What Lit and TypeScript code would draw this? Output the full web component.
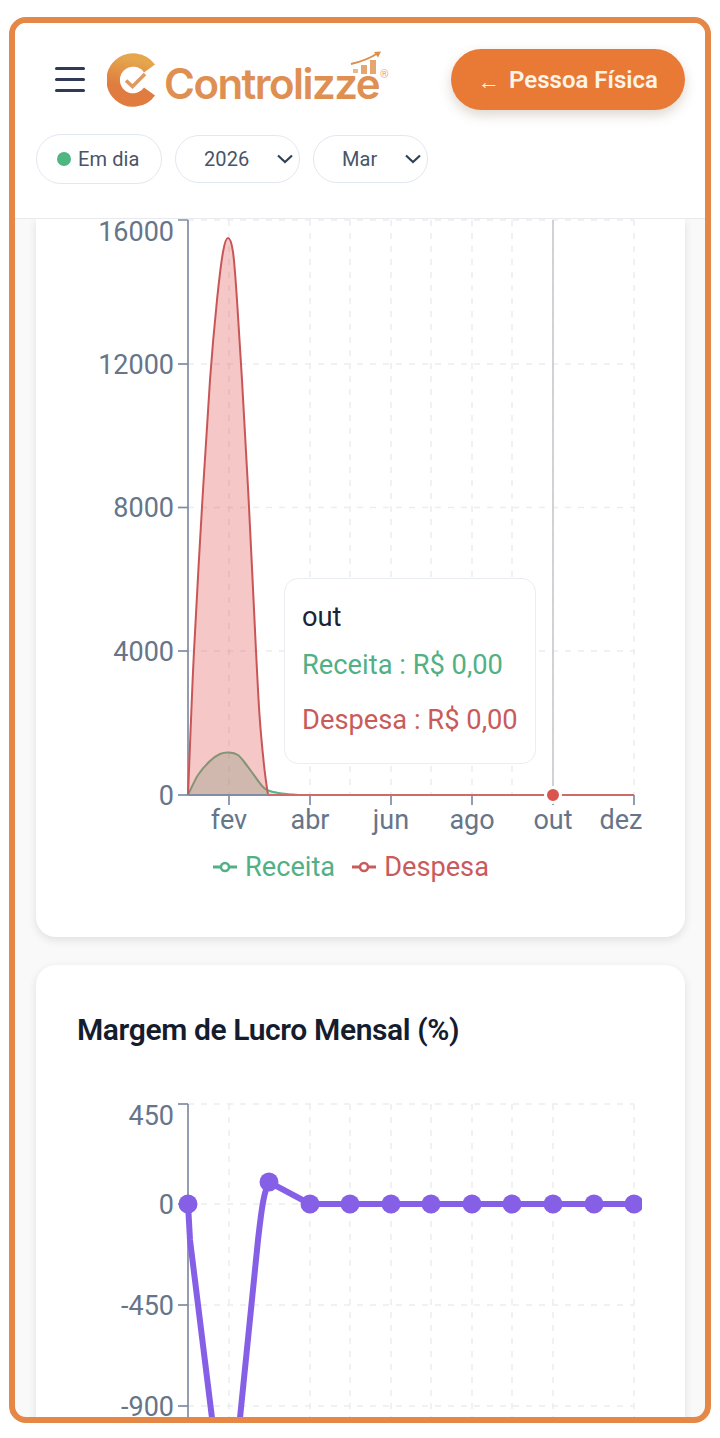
import { LitElement, html, css, svg } from "lit";
import { customElement } from "lit/decorators.js";

type Pt = [number, number];

// catmull-rom through hand traced points, gives the same soft look as the chart curves
function smooth(pts: Pt[]): string {
  let d = `M${pts[0][0]} ${pts[0][1]}`;
  for (let i = 0; i < pts.length - 1; i++) {
    const p0 = pts[Math.max(i - 1, 0)];
    const p1 = pts[i];
    const p2 = pts[i + 1];
    const p3 = pts[Math.min(i + 2, pts.length - 1)];
    const c1x = p1[0] + (p2[0] - p0[0]) / 6;
    const c1y = p1[1] + (p2[1] - p0[1]) / 6;
    const c2x = p2[0] - (p3[0] - p1[0]) / 6;
    const c2y = p2[1] - (p3[1] - p1[1]) / 6;
    d += ` C${c1x.toFixed(1)} ${c1y.toFixed(1)} ${c2x.toFixed(1)} ${c2y.toFixed(1)} ${p2[0]} ${p2[1]}`;
  }
  return d;
}

const RED: Pt[] = [
  [188, 795], [191, 720], [194, 651], [202, 507], [210, 380], [217, 300], [223, 252], [228, 238],
  [233, 252], [237, 300], [242, 380], [249, 507], [256, 651], [259.5, 715], [264, 765], [268, 795],
];
const GREEN: Pt[] = [
  [188, 795], [198, 775], [210, 761], [220, 754], [229, 752.5], [238, 755], [245, 763], [251, 771], [263, 787],
  [270, 791], [282, 793.5], [300, 795],
];

const GRID_X = [229, 310, 350, 391, 431, 472, 512, 553, 634];
const MONTHS: [string, number, number][] = [
  ["fev", 229, 229], ["abr", 310, 310], ["jun", 391, 391], ["ago", 472, 472], ["out", 553, 553], ["dez", 634, 621],
];
const MARGIN_X = [310, 350, 391, 431, 472, 512, 553, 594, 634];

@customElement("app-root")
export class AppRoot extends LitElement {
  static styles = css`
    :host {
      display: block;
      box-sizing: border-box;
      width: 720px;
      height: 1438px;
      padding: 17px 9px 15px;
      background: #fff;
      font-family: Roboto, "Liberation Sans", sans-serif;
    }
    .frame {
      box-sizing: border-box;
      height: 1406px;
      border: 6px solid #e58847;
      border-radius: 17px;
      overflow: hidden;
      display: flex;
      flex-direction: column;
      background: #f9f9f9;
    }
    header {
      box-sizing: border-box;
      flex: none;
      height: 196px;
      padding: 26px 20px 0 21px;
      background: #fff;
      border-bottom: 1px solid #e8eaed;
    }
    .top {
      display: flex;
      align-items: center;
      height: 61px;
    }
    .burger {
      width: 30px;
      height: 25px;
      margin: 0 22px 0 19px;
      flex: none;
      display: flex;
      flex-direction: column;
      justify-content: space-between;
    }
    .burger span {
      height: 3px;
      border-radius: 2px;
      background: #2f3b52;
    }
    .logo {
      position: relative;
      display: flex;
      align-items: center;
      flex: 1;
      height: 61px;
    }
    .logo-mark {
      flex: none;
    }
    .logo-text {
      margin-left: 5px;
      margin-top: 8px;
      font-family: Inter, sans-serif;
      font-size: 42px;
      font-weight: 600;
      letter-spacing: -1.55px;
      line-height: 48px;
      color: #e08f52;
    }
    .logo-chart {
      position: absolute;
      left: 243px;
      top: 2px;
    }
    .reg {
      position: absolute;
      left: 273px;
      top: 20px;
      font-size: 11px;
      line-height: 12px;
      color: #e9a878;
    }
    .back {
      flex: none;
      box-sizing: border-box;
      width: 234px;
      height: 61px;
      display: flex;
      align-items: center;
      justify-content: center;
      gap: 9px;
      border-radius: 31px;
      background: #e87a36;
      color: #fdf3e6;
      font-size: 24px;
      font-weight: 600;
      box-shadow: 0 5px 12px rgba(120, 90, 60, 0.25);
    }
    .back .arrow {
      font-size: 22px;
      margin-top: 4px;
    }
    .chips {
      display: flex;
      align-items: center;
      gap: 13px;
      margin-top: 24px;
    }
    .chip {
      box-sizing: border-box;
      display: flex;
      align-items: center;
      height: 48px;
      border: 1px solid #e2e8f0;
      border-radius: 25px;
      background: #fff;
      color: #475569;
      font-size: 20px;
      letter-spacing: 0.1px;
    }
    .status {
      width: 126px;
      height: 50px;
      padding-left: 20px;
      gap: 7px;
    }
    .status i {
      width: 14px;
      height: 14px;
      border-radius: 50%;
      background: #4fb583;
    }
    .select {
      justify-content: space-between;
      padding: 0 5px 0 28px;
    }
    .y {
      width: 125px;
    }
    .m {
      width: 115px;
    }
    main {
      flex: 1;
      min-height: 0;
      overflow: hidden;
      display: flex;
      flex-direction: column;
      gap: 28px;
      padding: 0 20px 0 21px;
    }
    .card {
      position: relative;
      flex: none;
      background: #fff;
      border-radius: 20px;
      box-shadow: 0 3px 9px rgba(30, 41, 59, 0.12);
    }
    .first {
      box-sizing: border-box;
      height: 718px;
      border-radius: 0 0 20px 20px;
    }
    .second {
      padding: 47px 0 40px;
    }
    h2 {
      margin: 0 0 12px 41px;
      font-size: 30px;
      line-height: 36px;
      font-weight: 600;
      letter-spacing: -0.38px;
      color: #141c2e;
    }
    svg.chart {
      display: block;
    }
    svg text {
      font-family: Roboto, "Liberation Sans", sans-serif;
      font-size: 27px;
      fill: #667589;
    }
    .legend {
      display: flex;
      align-items: center;
      height: 34px;
      padding-left: 177px;
      font-size: 27.2px;
    }
    .legend span {
      margin-left: 8px;
      margin-right: 17px;
    }
    .green {
      color: #52b085;
    }
    .red {
      color: #c95b5b;
    }
    .tooltip {
      position: absolute;
      left: 248px;
      top: 359px;
      box-sizing: border-box;
      width: 252px;
      height: 186px;
      padding: 20px 0 0 17px;
      background: #fff;
      border: 1px solid #eaedf1;
      border-radius: 14px;
      font-size: 27.3px;
      line-height: 36px;
    }
    .tooltip div {
      margin-bottom: 19px;
    }
    .tooltip .label {
      margin-bottom: 12px;
      color: #1b2436;
    }
  `;

  private grid(xs: number[], ys: number[], top: number, bottom: number) {
    return svg`
      <g stroke="#ebedf0" stroke-width="1.5" stroke-dasharray="6 7" fill="none">
        ${xs.map((x) => svg`<line x1=${x} x2=${x} y1=${top} y2=${bottom}></line>`)}
        ${ys.map((y) => svg`<line x1="188" x2="634" y1=${y} y2=${y}></line>`)}
      </g>`;
  }

  private yAxis(ticks: [string, number, number][], top: number, bottom: number) {
    return svg`
      <line x1="188" x2="188" y1=${top} y2=${bottom} stroke="#7f8ca3" stroke-width="1.7"></line>
      ${ticks.map(
        ([label, tick, base]) => svg`
          <line x1="178" x2="188" y1=${tick} y2=${tick} stroke="#7f8ca3" stroke-width="1.7"></line>
          <text x="174" y=${base} text-anchor="end">${label}</text>`
      )}`;
  }

  private renderRevenue() {
    const red = smooth(RED);
    const green = smooth(GREEN);
    return html`
      <svg class="chart" width="606" height="631" viewBox="36 219 606 631">
        ${this.grid(GRID_X, [220, 364, 507.5, 651], 220, 795)}
        ${this.yAxis(
          [["16000", 220, 241], ["12000", 364, 373.5], ["8000", 507.5, 517], ["4000", 651, 660.5], ["0", 795, 805]],
          220,
          795
        )}
        ${MONTHS.map(
          ([label, x, textX]) => svg`
            <line x1=${x} x2=${x} y1="795" y2="805" stroke="#7f8ca3" stroke-width="1.7"></line>
            <text x=${textX} y="829" text-anchor="middle">${label}</text>`
        )}
        <line x1="553" x2="553" y1="220" y2="795" stroke="#c9ccd1" stroke-width="1.7"></line>
        <path d="${green} L188 795 Z" fill="#4fb583" fill-opacity="0.3"></path>
        <path d=${green} fill="none" stroke="#55b488" stroke-width="2"></path>
        <path d="${red} L188 795 Z" fill="#e25555" fill-opacity="0.33"></path>
        <path d=${red} fill="none" stroke="#c95656" stroke-width="2"></path>
        <line x1="268" x2="634" y1="795" y2="795" stroke="#cf6a66" stroke-width="2"></line>
        <line x1="188" x2="268" y1="795" y2="795" stroke="#7f8ca3" stroke-width="2"></line>
        <circle cx="553" cy="795" r="7.5" fill="#d9534f" stroke="#fff" stroke-width="3"></circle>
      </svg>
      <div class="legend">
        <svg width="24" height="12" viewBox="0 0 24 12">
          <line x1="0" x2="24" y1="6" y2="6" stroke="#52b085" stroke-width="3"></line>
          <circle cx="12" cy="6" r="4" fill="#fff" stroke="#52b085" stroke-width="2.5"></circle>
        </svg>
        <span class="green">Receita</span>
        <svg width="24" height="12" viewBox="0 0 24 12">
          <line x1="0" x2="24" y1="6" y2="6" stroke="#c95b5b" stroke-width="3"></line>
          <circle cx="12" cy="6" r="4" fill="#fff" stroke="#c95b5b" stroke-width="2.5"></circle>
        </svg>
        <span class="red">Despesa</span>
      </div>
      <div class="tooltip">
        <div class="label">out</div>
        <div class="green">Receita : R$ 0,00</div>
        <div class="red">Despesa : R$ 0,00</div>
      </div>
    `;
  }

  private renderMargin() {
    const line =
      "M188 1204 L190 1240 L212 1418 L229 1530 L240 1418 L258 1240 C262 1205 264 1192 269 1182 L310 1204 L634 1204";
    const dots: Pt[] = [[188, 1204], [269, 1182], ...MARGIN_X.map((x): Pt => [x, 1204])];
    return html`
      <h2>Margem de Lucro Mensal (%)</h2>
      <svg class="chart" width="606" height="370" viewBox="36 1060 606 370">
        ${this.grid(GRID_X, [1104, 1204, 1305, 1406], 1104, 1430)}
        ${this.yAxis(
          [["450", 1104, 1125], ["0", 1204, 1213.5], ["-450", 1305, 1314.5], ["-900", 1406, 1415.5]],
          1104,
          1430
        )}
        <path d=${line} fill="none" stroke="#8560e6" stroke-width="6"></path>
        ${dots.map(([x, y]) => svg`<circle cx=${x} cy=${y} r="9.5" fill="#8560e6"></circle>`)}
      </svg>
    `;
  }

  private renderLogo() {
    return html`
      <svg class="logo-mark" width="52" height="56" viewBox="106 51 52 56">
        <defs>
          <linearGradient id="lg" x1="0.6" y1="0" x2="0.4" y2="1">
            <stop offset="0" stop-color="#e5a64e"></stop>
            <stop offset="0.7" stop-color="#e07c3f"></stop>
          </linearGradient>
        </defs>
        <path d="M148.5 67.5 A20 20 0 1 0 148.5 90.5" fill="none" stroke="url(#lg)" stroke-width="13.5"></path>
        <path d="M125 79.5 L131.5 85.5 L144 73" fill="none" stroke="#dd9a62" stroke-width="3.6"></path>
      </svg>
      <span class="logo-text">Controlizze</span>
      <svg class="logo-chart" width="32" height="26" viewBox="0 0 32 26">
        <path d="M1 13 C10 11 19 8 28 2" fill="none" stroke="#dd8c4c" stroke-width="1.8"></path>
        <path d="M24 1 L31 0.5 L28 6.5 Z" fill="#dd8c4c"></path>
        <rect x="3" y="18" width="5" height="4" fill="#e9b98a"></rect>
        <rect x="11" y="14" width="6" height="9" fill="#e6a670"></rect>
        <rect x="20" y="9" width="6" height="14" fill="#e6a670"></rect>
      </svg>
      <span class="reg">®</span>
    `;
  }

  private chevron() {
    return html`<svg width="18" height="10" viewBox="0 0 18 10">
      <path d="M2 1.5 L9 8 L16 1.5" fill="none" stroke="#334155" stroke-width="2.2"></path>
    </svg>`;
  }

  render() {
    return html`
      <div class="frame">
        <header>
          <div class="top">
            <div class="burger"><span></span><span></span><span></span></div>
            <div class="logo">${this.renderLogo()}</div>
            <div class="back"><span class="arrow">←</span><span>Pessoa Física</span></div>
          </div>
          <div class="chips">
            <div class="chip status"><i></i>Em dia</div>
            <div class="chip select y">2026 ${this.chevron()}</div>
            <div class="chip select m">Mar ${this.chevron()}</div>
          </div>
        </header>
        <main>
          <section class="card first">${this.renderRevenue()}</section>
          <section class="card second">${this.renderMargin()}</section>
        </main>
      </div>
    `;
  }
}
